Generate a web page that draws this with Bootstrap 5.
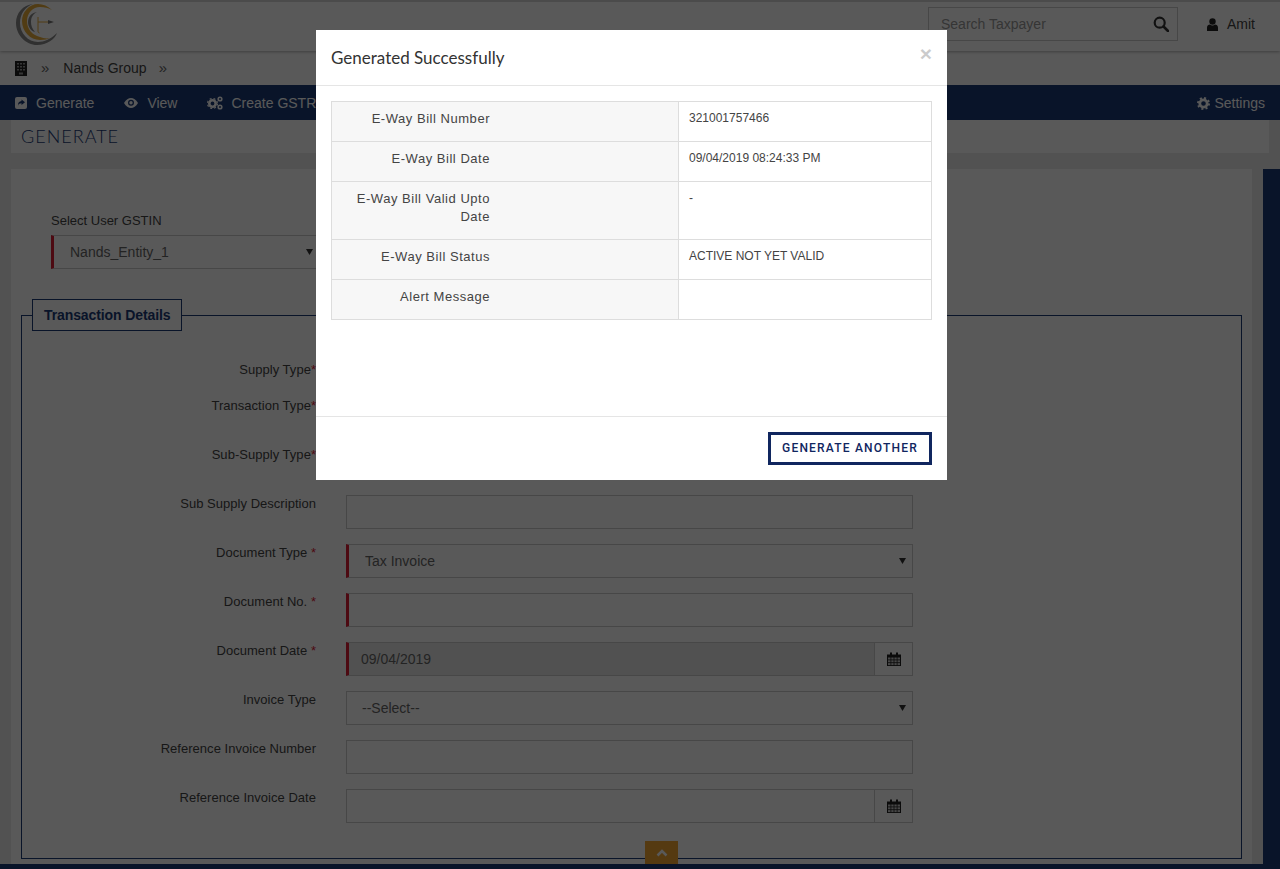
<!DOCTYPE html>
<html lang="en">
<head>
  <meta charset="UTF-8">
  <meta name="viewport" content="width=device-width, initial-scale=1">
  <title>Generate E-Way Bill</title>
  <link href="https://cdn.jsdelivr.net/npm/bootstrap@5.3.0/dist/css/bootstrap.min.css" rel="stylesheet">
  <style>
    html, body { height: 869px; overflow: hidden; }
    body {
      background: #ebebeb;
      color: #333;
      font-family: "Liberation Sans", Arial, sans-serif;
      font-size: 14px;
    }
    .page-wrap { height: 869px; }
    .top-head { height: 51px; background: #fff; border-top: 2px solid #d8d8d8; box-shadow: 0 1px 3px rgba(0,0,0,.3); position: relative; z-index: 1; padding: 0 25px 0 15px; }
    .logo-svg { width: 44px; height: 44px; margin-top: 1px; }
    .search-box { width: 250px; height: 34px; border: 1px solid #ccc; padding: 0 8px 0 12px; margin-right: 29px; margin-top: 5px; }
    .search-box input { border: 0; outline: 0; background: transparent; width: 200px; font-size: 14px; color: #333; padding: 0; }
    .search-box input::placeholder { color: #999; opacity: 1; }
    .user-name { color: #444; margin-top: 5px; gap: 9px; }
    .crumb-bar { height: 34px; background: #fff; padding: 0 15px; color: #444; }
    .crumb-bar .sep { color: #666; margin: 0 14px 0 14px; font-size: 15px; }
    .crumb-bar .sep-b { color: #666; margin-left: 12px; font-size: 15px; }
    .main-bar { height: 35px; background: #1a3975; padding: 1px 15px 0; color: #fff; }
    .main-bar .nav-item-x { margin-right: 30px; gap: 9px; color: #fff; white-space: nowrap; }
    .main-bar .nav-item-x.tight { gap: 8px; }
    .title-bar { height: 33px; margin: 0 11px; background: #fff; padding-left: 10px; color: #1a3975; font-family: Lato, "Open Sans", sans-serif; font-size: 18px; font-weight: 300; letter-spacing: 1px; line-height: 33px; }
    .body-zone { margin-top: 16px; flex: 1 1 auto; min-height: 0; padding-left: 11px; }
    .main-card { width: 1241px; background: #fff; padding: 44px 10px 0; }
    .side-strip { width: 17px; margin-left: 11px; background: #1a3975; }
    .foot-strip { height: 5px; background: #1a3975; flex: 0 0 auto; }
    .gstin-wrap { width: 269px; margin-left: 30px; }
    .gstin-wrap label { display: block; color: #444; font-size: 13px; line-height: 16px; margin-bottom: 6px; }
    .fld, .fld-sel {
      display: block;
      width: 100%;
      height: 34px;
      border: 1px solid #ccc;
      border-radius: 0;
      background-color: #fff;
      color: #666;
      font-size: 14px;
      outline: 0;
      font-family: inherit;
    }
    .fld { padding: 0 14px; }
    .fld-sel {
      appearance: none;
      padding: 0 15px;
      background-image: url("data:image/svg+xml,%3Csvg xmlns='http://www.w3.org/2000/svg' width='7' height='6'%3E%3Cpath d='M0 0h7L3.500 6z' fill='%23333'/%3E%3C/svg%3E");
      background-repeat: no-repeat;
      background-position: right 6px center;
    }
    .req-left { border-left: 3px solid #dc1e35; padding-left: 16px; }
    .fld.req-left { padding-left: 12px; }
    .fld:disabled { background: #e9e9e9; color: #666; }
    .tx-field { border: 1px solid #1a3975; margin: 30px 0 0; padding: 0; height: 560px; position: relative; }
    .tx-legend { float: none; width: auto; display: inline-block; margin: 0 0 0 10px; padding: 0 11px; height: 32px; line-height: 31px; background: #fff; border: 1px solid #1a3975; color: #1a3975; font-size: 14px; font-weight: 700; letter-spacing: -.1px; }
    .form-rows { padding-top: 31px; }
    .form-line { display: flex; height: 49px; }
    .form-line.slim { height: 36px; }
    .line-label { width: 294px; text-align: right; color: #444; font-size: 13px; letter-spacing: .03px; line-height: 16px; flex: 0 0 auto; }
    .line-label i { font-style: normal; color: #dc1e35; }
    .line-input { width: 567px; margin-left: 30px; margin-top: -1px; flex: 0 0 auto; }
    .date-addon { width: 38px; height: 34px; border: 1px solid #ccc; border-left: 0; background: #fff; flex: 0 0 auto; }
    .to-top { position: absolute; left: 645px; bottom: 5px; width: 33px; height: 23px; background: #f3a633; z-index: 2; }
    .modal-backdrop.show { opacity: .65; }
    .gen-modal { width: 631px; max-width: 631px; margin: 30px auto 0 316px; }
    .gen-modal .modal-content { border: 0; border-radius: 0; }
    .gen-modal .modal-header { height: 56px; padding: 0 15px; border-bottom: 1px solid #e5e5e5; border-radius: 0; }
    .gen-modal .modal-title { font-family: Lato, "Open Sans", sans-serif; font-size: 17px; font-weight: 400; color: #333; line-height: 56px; }
    .x-close { border: 0; background: none; padding: 0; font-family: "Liberation Sans", sans-serif; font-size: 21px; font-weight: 700; line-height: 1; color: #000; opacity: .2; margin-top: -8px; margin-right: 0; }
    .gen-modal .modal-body { height: 330px; padding: 15px; }
    .gen-modal .modal-footer { height: 64px; padding: 15px; border-top: 1px solid #e5e5e5; border-radius: 0; }
    .bill-tbl { width: 601px; table-layout: fixed; border-collapse: collapse; margin: 0; }
    .bill-tbl th, .bill-tbl td { border: 1px solid #ddd; padding: 8px 10px 13px; line-height: 18px; vertical-align: top; }
    .bill-tbl th { width: 347px; background: #f7f7f7; font-weight: 400; font-size: 13px; color: #444; text-align: right; padding-right: 188px; letter-spacing: .53px; }
    .bill-tbl td { font-size: 12px; color: #444; background: #fff; padding-top: 7px; padding-bottom: 14px; }
    .btn-another { width: 164px; height: 33px; padding: 0 0 2px; margin: 0; border: 3px solid #10265f; border-radius: 0; background: #fff; color: #10265f; font-family: Roboto, sans-serif; font-size: 12px; font-weight: 500; letter-spacing: 1.2px; text-transform: uppercase; }
    .btn-another:hover { background: #fff; color: #10265f; border-color: #10265f; }
  </style>
</head>
<body class="modal-open">
  <div class="page-wrap d-flex flex-column position-relative">
    <!-- header -->
    <header class="top-head d-flex align-items-start justify-content-between flex-shrink-0">
      <svg class="logo-svg" viewBox="0 0 44 44">
        <path d="M18 1C8 2 1 10 1 20C1 32 11 42 22 42C32 42 40 36 42 30C36 36 29 39 23 39C13 39 5 30 5 20C5 11 10 4 18 1z" fill="#8a8a8a"/>
        <path d="M37 7C33 3 28 1 23 1C14 1 7 9 7 18C7 28 15 37 25 37C29 37 33 36 35 35C31 36 28 35 25 34C17 32 12 26 12 18C12 10 18 4 25 4C29 4 34 5 37 7z" fill="#e8ac3a"/>
        <path d="M22 9C16 10 13 14 13 19C13 24 16 28 20 29C17 26 16 22 16 19C16 14 18 11 22 9z" fill="#888"/>
        <path d="M23 14V28C23 29 23.500 30 24.500 30M23 19H33" stroke="#e8ac3a" stroke-width="1" fill="none"/>
        <path d="M33 17l6 2-6 2z" fill="#777"/>
      </svg>
      <div class="d-flex align-items-center">
        <div class="search-box d-flex align-items-center justify-content-between">
          <input type="text" placeholder="Search Taxpayer">
          <svg width="16" height="16" viewBox="0 0 16 16"><circle cx="6.700" cy="6.700" r="5" fill="none" stroke="#333" stroke-width="2.200"/><path d="M10.500 10.500L15 15" stroke="#333" stroke-width="2.600" stroke-linecap="round"/></svg>
        </div>
        <div class="d-flex align-items-center user-name">
          <svg width="11" height="13" viewBox="0 0 11 13"><circle cx="5.500" cy="3.500" r="3.200" fill="#222"/><path d="M0 13V9.500C0 7.500 1.500 6.500 3 6.500C4.500 7.800 6.500 7.800 8 6.500C9.500 6.500 11 7.500 11 9.500V13z" fill="#222"/></svg>
          <span>Amit</span>
        </div>
      </div>
    </header>

    <!-- breadcrumb -->
    <div class="crumb-bar d-flex align-items-center flex-shrink-0">
      <svg width="12" height="15" viewBox="0 0 12 15"><rect width="12" height="15" fill="#222"/><g fill="#999"><rect x="2" y="2" width="2" height="1.500"/><rect x="5" y="2" width="2" height="1.500"/><rect x="8" y="2" width="2" height="1.500"/><rect x="2" y="5" width="2" height="1.500"/><rect x="5" y="5" width="2" height="1.500"/><rect x="8" y="5" width="2" height="1.500"/><rect x="2" y="8" width="2" height="1.500"/><rect x="5" y="8" width="2" height="1.500"/><rect x="8" y="8" width="2" height="1.500"/><rect x="4" y="11.500" width="4" height="2"/></g></svg>
      <span class="sep">&raquo;</span>
      <span>Nands Group</span>
      <span class="sep-b">&raquo;</span>
    </div>

    <!-- main nav -->
    <nav class="main-bar d-flex align-items-center justify-content-between flex-shrink-0">
      <div class="d-flex align-items-center">
        <span class="nav-item-x d-flex align-items-center">
          <svg width="12" height="12" viewBox="0 0 12 12"><path d="M2 0h8a2 2 0 0 1 2 2v8a2 2 0 0 1-2 2H2a2 2 0 0 1-2-2V2a2 2 0 0 1 2-2z" fill="#fff"/><path d="M6.500 2.500L10 5.200 6.500 8V6.300C4.700 6.300 3.500 7 3 8.800 2.800 6 4.300 4.200 6.500 4.100z" fill="#1a3975"/></svg>
          <span>Generate</span>
        </span>
        <span class="nav-item-x d-flex align-items-center">
          <svg width="14" height="10" viewBox="0 0 14 10"><path d="M0 5C2 1.500 4.500 0 7 0s5 1.500 7 5c-2 3.500-4.500 5-7 5S2 8.500 0 5z" fill="#fff"/><circle cx="7" cy="4.800" r="3" fill="#1a3975"/><circle cx="7" cy="4.800" r="1.700" fill="#fff"/></svg>
          <span>View</span>
        </span>
        <span class="nav-item-x tight d-flex align-items-center">
          <svg width="16" height="14" viewBox="0 0 16 14"><g fill="none" stroke="#fff"><circle cx="5.500" cy="7.500" r="3.200" stroke-width="2.600"/><circle cx="5.500" cy="7.500" r="5" stroke-width="1.200" stroke-dasharray="2 2"/><circle cx="13" cy="3" r="1.800" stroke-width="1.600"/><circle cx="13" cy="11" r="1.800" stroke-width="1.600"/></g></svg>
          <span>Create GSTR</span>
        </span>
      </div>
      <span class="d-flex align-items-center gap-1">
        <svg width="13" height="13" viewBox="0 0 14 14"><circle cx="7" cy="7" r="4" fill="none" stroke="#fff" stroke-width="3"/><circle cx="7" cy="7" r="6" fill="none" stroke="#fff" stroke-width="2" stroke-dasharray="2.200 2.500"/></svg>
        <span>Settings</span>
      </span>
    </nav>

    <div class="title-bar flex-shrink-0">GENERATE</div>

    <div class="body-zone d-flex">
      <div class="main-card">
        <div class="gstin-wrap">
          <label for="gstinSel">Select User GSTIN</label>
          <select id="gstinSel" class="fld-sel req-left"><option>Nands_Entity_1</option></select>
        </div>

        <fieldset class="tx-field">
          <legend class="tx-legend">Transaction Details</legend>
          <div class="form-rows">
            <div class="form-line slim"><div class="line-label">Supply Type<i>*</i></div></div>
            <div class="form-line"><div class="line-label">Transaction Type<i>*</i></div></div>
            <div class="form-line"><div class="line-label">Sub-Supply Type<i>*</i></div></div>
            <div class="form-line">
              <div class="line-label">Sub Supply Description</div>
              <div class="line-input"><input class="fld" type="text"></div>
            </div>
            <div class="form-line">
              <div class="line-label">Document Type <i>*</i></div>
              <div class="line-input"><select class="fld-sel req-left"><option>Tax Invoice</option></select></div>
            </div>
            <div class="form-line">
              <div class="line-label">Document No. <i>*</i></div>
              <div class="line-input"><input class="fld req-left" type="text"></div>
            </div>
            <div class="form-line">
              <div class="line-label">Document Date <i>*</i></div>
              <div class="line-input d-flex">
                <input class="fld req-left" type="text" value="09/04/2019" disabled>
                <span class="date-addon d-flex align-items-center justify-content-center">
                  <svg width="14" height="14" viewBox="0 0 14 14"><use href="#calIcon"/></svg>
                </span>
              </div>
            </div>
            <div class="form-line">
              <div class="line-label">Invoice Type</div>
              <div class="line-input"><select class="fld-sel"><option>--Select--</option></select></div>
            </div>
            <div class="form-line">
              <div class="line-label">Reference Invoice Number</div>
              <div class="line-input"><input class="fld" type="text"></div>
            </div>
            <div class="form-line">
              <div class="line-label">Reference Invoice Date</div>
              <div class="line-input d-flex">
                <input class="fld" type="text">
                <span class="date-addon d-flex align-items-center justify-content-center">
                  <svg width="14" height="14" viewBox="0 0 14 14"><use href="#calIcon"/></svg>
                </span>
              </div>
            </div>
          </div>
        </fieldset>
      </div>
      <div class="side-strip"></div>
    </div>
    <div class="foot-strip"></div>
    <div class="to-top d-flex align-items-center justify-content-center">
      <svg width="12" height="8" viewBox="0 0 12 8"><path d="M1.500 6.500L6 2l4.500 4.500" fill="none" stroke="#fff" stroke-width="2.500"/></svg>
    </div>
  </div>

  <svg width="0" height="0" class="position-absolute">
    <symbol id="calIcon" viewBox="0 0 14 14">
      <path d="M0 2.500h14V14H0z" fill="#222"/>
      <path d="M3 0.500h2v3.500H3zM9 0.500h2v3.500H9z" fill="#222"/>
      <g fill="#ccc"><rect x="1" y="5.500" width="2.500" height="2"/><rect x="4.300" y="5.500" width="2.300" height="2"/><rect x="7.400" y="5.500" width="2.300" height="2"/><rect x="10.500" y="5.500" width="2.500" height="2"/><rect x="1" y="8.300" width="2.500" height="2"/><rect x="4.300" y="8.300" width="2.300" height="2"/><rect x="7.400" y="8.300" width="2.300" height="2"/><rect x="10.500" y="8.300" width="2.500" height="2"/><rect x="1" y="11.100" width="2.500" height="2"/><rect x="4.300" y="11.100" width="2.300" height="2"/><rect x="7.400" y="11.100" width="2.300" height="2"/><rect x="10.500" y="11.100" width="2.500" height="2"/></g>
    </symbol>
  </svg>

  <div class="modal-backdrop show"></div>
  <div class="modal show d-block" tabindex="-1">
    <div class="modal-dialog gen-modal">
      <div class="modal-content">
        <div class="modal-header">
          <h5 class="modal-title">Generated Successfully</h5>
          <button type="button" class="x-close" aria-label="Close">&times;</button>
        </div>
        <div class="modal-body">
          <table class="bill-tbl">
            <tr><th>E-Way Bill Number</th><td>321001757466</td></tr>
            <tr><th>E-Way Bill Date</th><td>09/04/2019 08:24:33 PM</td></tr>
            <tr><th>E-Way Bill Valid Upto Date</th><td>-</td></tr>
            <tr><th>E-Way Bill Status</th><td>ACTIVE NOT YET VALID</td></tr>
            <tr><th>Alert Message</th><td></td></tr>
          </table>
        </div>
        <div class="modal-footer">
          <button type="button" class="btn btn-another">Generate Another</button>
        </div>
      </div>
    </div>
  </div>

  <script src="https://cdn.jsdelivr.net/npm/bootstrap@5.3.0/dist/js/bootstrap.bundle.min.js"></script>
</body>
</html>
